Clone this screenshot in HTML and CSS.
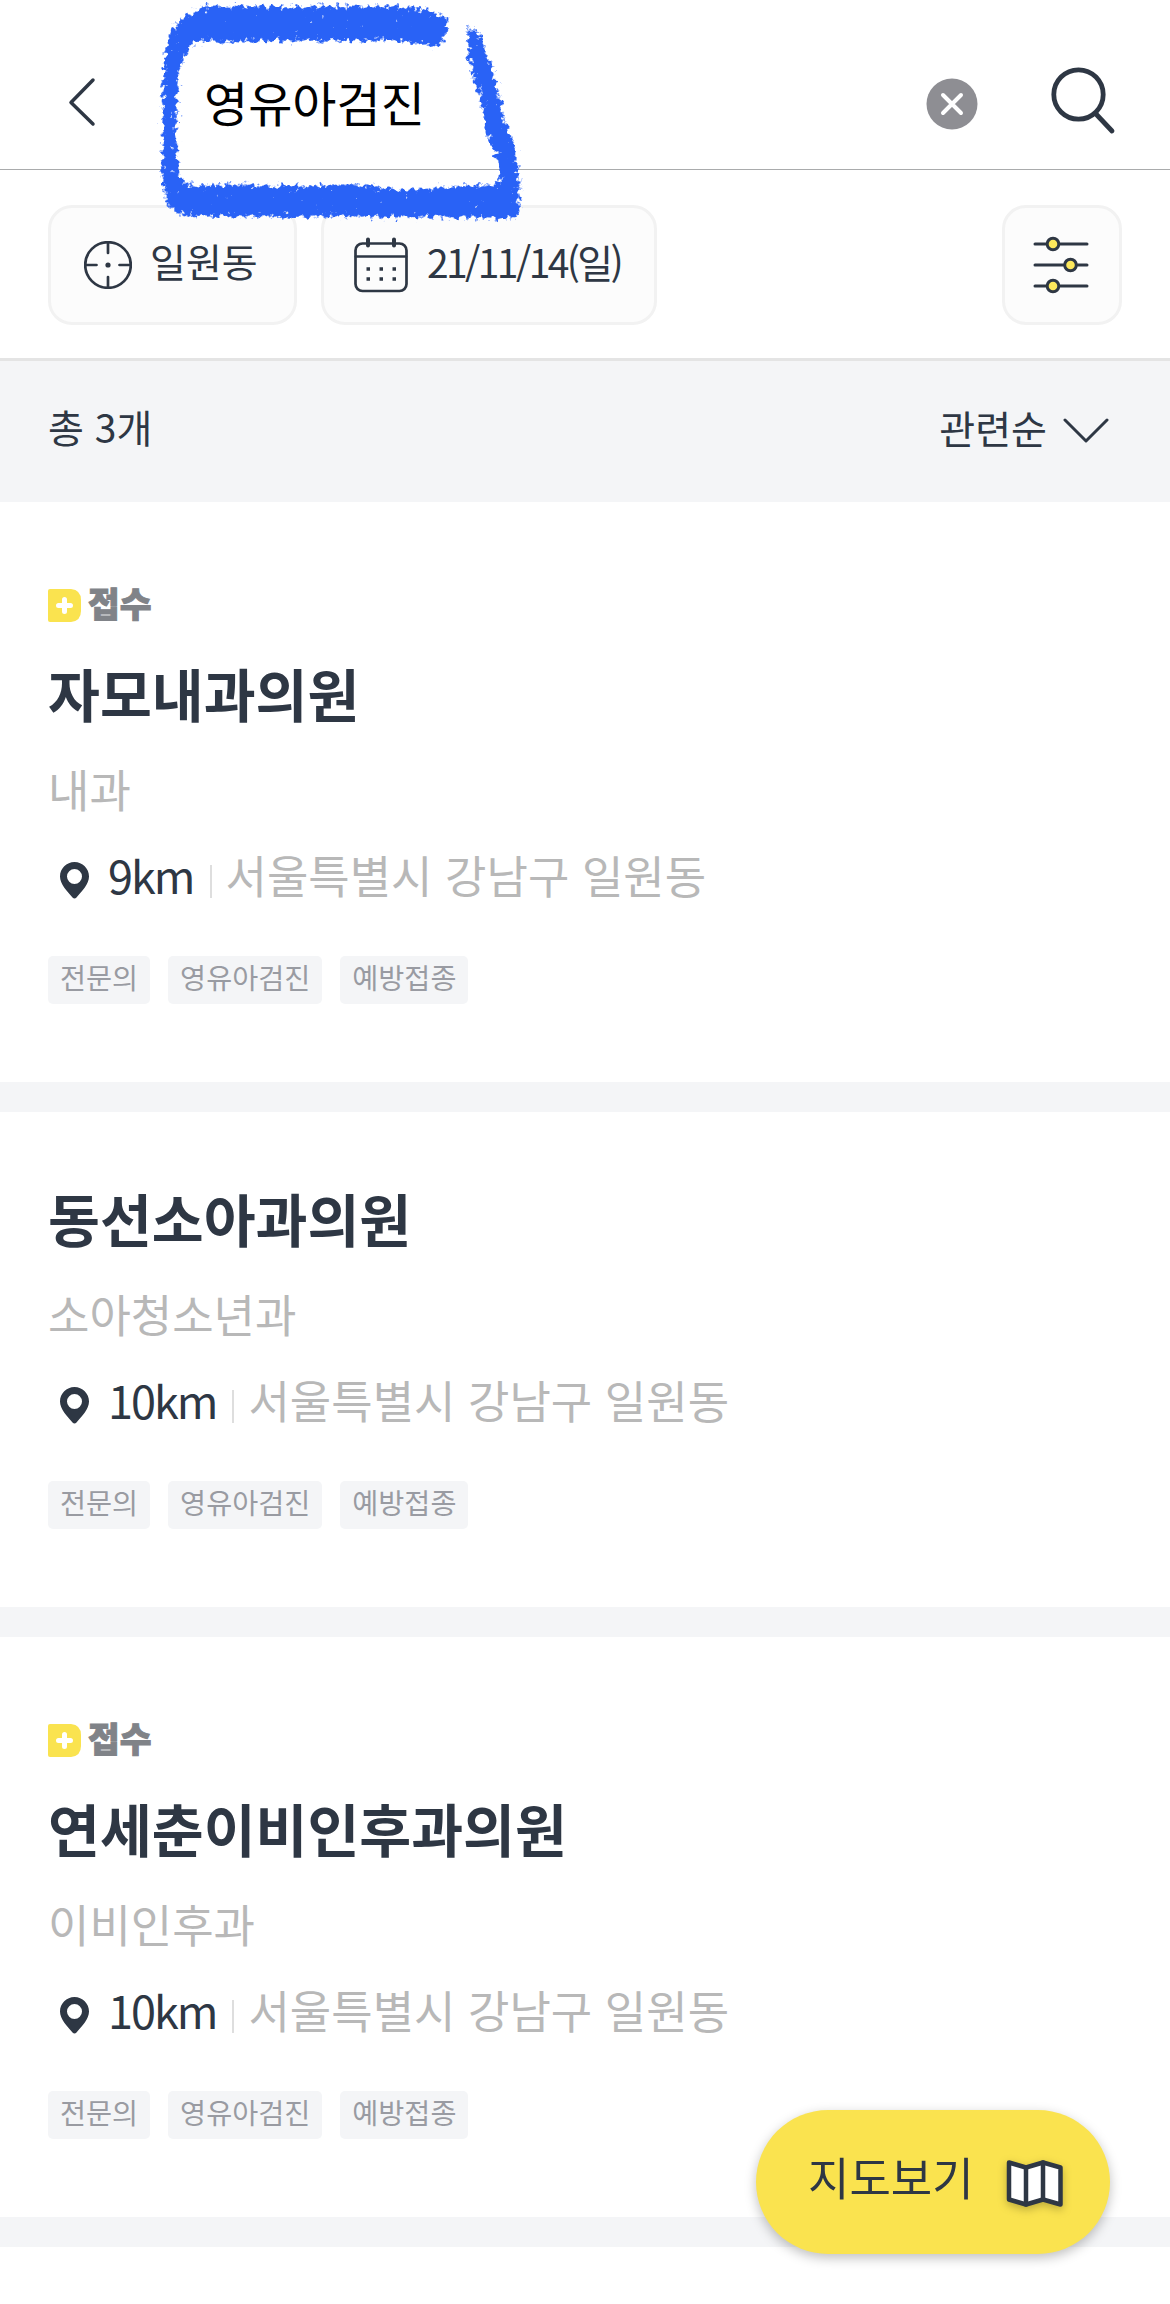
FILE: index.html
```html
<!DOCTYPE html>
<html lang="ko">
<head>
    <meta charset="UTF-8">
    <meta name="viewport" content="width=device-width, initial-scale=1.0">
    <title>영유아검진</title>
    <link rel="stylesheet" href="styles.css">
</head>
<body>
    <header class="search-bar">
        <button class="icon-button back">
            <svg width="28" height="50" viewBox="0 0 28 50"><path d="M25 3 L3 25.5 L25 47" /></svg>
        </button>
        <input type="text" class="search-input" value="영유아검진">
        <button class="icon-button clear">
            <svg width="52" height="52" viewBox="0 0 52 52">
                <circle cx="26" cy="26" r="25.5" />
                <path d="M17 17 L35 35 M35 17 L17 35" />
            </svg>
        </button>
        <button class="icon-button search">
            <svg width="66" height="70" viewBox="0 0 66 70">
                <circle cx="28.5" cy="29.5" r="24.7" />
                <path d="M46 49 L62 66" />
            </svg>
        </button>
    </header>

    <div class="filters">
        <button class="filter location">
            <svg width="48" height="48" viewBox="0 0 48 48">
                <circle cx="24" cy="24" r="22.8" />
                <path d="M24 1 V12 M24 36 V47 M1 24 H12.500 M35.500 24 H47" />
                <circle class="dot" cx="24" cy="24" r="2.600" />
            </svg>
            <span>일원동</span>
        </button>
        <button class="filter date">
            <svg width="54" height="56" viewBox="0 0 54 56">
                <rect x="1.500" y="6.500" width="51" height="47.500" rx="7" />
                <path d="M2 19.500 H52" />
                <path class="ring" d="M14 2.500 V8.500 M40 2.500 V8.500" />
                <path class="days" d="M12.500 32 H16 M25.500 32 H29 M38.500 32 H42 M12.500 42 H16 M25.500 42 H29 M38.500 42 H42" />
            </svg>
            <span>21/11/14(일)</span>
        </button>
        <button class="filter options">
            <svg width="58" height="60" viewBox="0 0 58 60">
                <path d="M3 9 H55 M3 30 H55 M3 51 H55" />
                <circle cx="21" cy="9" r="5.800" />
                <circle cx="38.500" cy="30" r="5.800" />
                <circle cx="21" cy="51" r="5.800" />
            </svg>
        </button>
    </div>

    <div class="summary">
        <span>총 3개</span>
        <button class="sort">
            <span>관련순</span>
            <svg width="46" height="26" viewBox="0 0 46 26"><path d="M2 2 L23 23 L44 2" /></svg>
        </button>
    </div>

    <main>
        <article class="hospital">
            <div class="badge">
                <svg width="33" height="33" viewBox="0 0 33 33">
                    <path class="badge-bg" d="M2 0 H23 Q33 1 33 11 V22 Q33 32 23 33 H2 Q0 33 0 31 V2 Q0 0 2 0 Z" />
                    <path class="badge-plus" d="M16.500 10.500 V22.500 M10.500 16.500 H22.500" />
                </svg>
                <span>접수</span>
            </div>
            <h2>자모내과의원</h2>
            <p class="department">내과</p>
            <div class="place">
                <svg class="pin" width="29" height="37" viewBox="0 0 29 37"><path fill-rule="evenodd" d="M14.500 0 C22.500 0 29 6.500 29 14.500 C29 22 22 29 16.500 35.500 Q14.500 37.500 12.500 35.500 C7 29 0 22 0 14.500 C0 6.500 6.500 0 14.500 0 Z M14.500 7 A7.500 7.500 0 1 0 14.500 22 A7.500 7.500 0 1 0 14.500 7 Z" /></svg>
                <span class="distance">9km</span>
                <span class="address">서울특별시 강남구 일원동</span>
            </div>
            <div class="tags">
                <span>전문의</span>
                <span>영유아검진</span>
                <span>예방접종</span>
            </div>
        </article>

        <article class="hospital">
            <h2>동선소아과의원</h2>
            <p class="department">소아청소년과</p>
            <div class="place">
                <svg class="pin" width="29" height="37" viewBox="0 0 29 37"><path fill-rule="evenodd" d="M14.500 0 C22.500 0 29 6.500 29 14.500 C29 22 22 29 16.500 35.500 Q14.500 37.500 12.500 35.500 C7 29 0 22 0 14.500 C0 6.500 6.500 0 14.500 0 Z M14.500 7 A7.500 7.500 0 1 0 14.500 22 A7.500 7.500 0 1 0 14.500 7 Z" /></svg>
                <span class="distance">10km</span>
                <span class="address">서울특별시 강남구 일원동</span>
            </div>
            <div class="tags">
                <span>전문의</span>
                <span>영유아검진</span>
                <span>예방접종</span>
            </div>
        </article>

        <article class="hospital">
            <div class="badge">
                <svg width="33" height="33" viewBox="0 0 33 33">
                    <path class="badge-bg" d="M2 0 H23 Q33 1 33 11 V22 Q33 32 23 33 H2 Q0 33 0 31 V2 Q0 0 2 0 Z" />
                    <path class="badge-plus" d="M16.500 10.500 V22.500 M10.500 16.500 H22.500" />
                </svg>
                <span>접수</span>
            </div>
            <h2>연세춘이비인후과의원</h2>
            <p class="department">이비인후과</p>
            <div class="place">
                <svg class="pin" width="29" height="37" viewBox="0 0 29 37"><path fill-rule="evenodd" d="M14.500 0 C22.500 0 29 6.500 29 14.500 C29 22 22 29 16.500 35.500 Q14.500 37.500 12.500 35.500 C7 29 0 22 0 14.500 C0 6.500 6.500 0 14.500 0 Z M14.500 7 A7.500 7.500 0 1 0 14.500 22 A7.500 7.500 0 1 0 14.500 7 Z" /></svg>
                <span class="distance">10km</span>
                <span class="address">서울특별시 강남구 일원동</span>
            </div>
            <div class="tags">
                <span>전문의</span>
                <span>영유아검진</span>
                <span>예방접종</span>
            </div>
        </article>
    </main>

    <button class="map-button">
        <span>지도보기</span>
        <svg width="58" height="50" viewBox="0 0 58 50">
            <path d="M3 3.500 L20 8.500 L37 3.500 L54.500 8.500 V45.500 L37 40.500 L20 45.500 L3 40.500 Z" />
            <path d="M20 8.500 V45.500 M37 3.500 V40.500" />
        </svg>
    </button>

    <!-- crayon mark round the search word -->
    <svg class="crayon" width="560" height="240" viewBox="0 0 560 240">
        <filter id="grain" filterUnits="userSpaceOnUse" x="0" y="0" width="560" height="240" color-interpolation-filters="sRGB">
            <feTurbulence type="fractalNoise" baseFrequency="0.2" numOctaves="3" seed="4" result="noise" />
            <feGaussianBlur in="SourceAlpha" stdDeviation="3.5" result="soft" />
            <feComposite in="soft" in2="noise" operator="arithmetic" k2="1.500" k3="1.800" k4="-1.550" />
            <feComponentTransfer result="grains"><feFuncA type="linear" slope="3" intercept="0" /></feComponentTransfer>
            <!-- keep the grains near the stroke -->
            <feMorphology in="SourceAlpha" operator="dilate" radius="5" result="near" />
            <feComposite in="grains" in2="near" operator="in" result="mask" />
            <feFlood flood-color="#2962f6" />
            <feComposite in2="mask" operator="in" />
        </filter>
        <path filter="url(#grain)" d="M450 18 L425 9 L400 6 L340 6 L270 6 L205 6 L182 18 L168 34 L163 70 L162 130 L162 180 L166 202 L180 216 L260 217 L400 217 L460 218 L519 219 L520 190 L516 150 L505 120 L496 80 L480 35 L470 22 L466 40 L469 62 L479 95 L487 135 L498 165 L501 184 L450 186 L400 190 L360 184 L300 186 L230 184 L190 186 L178 175 L177 130 L178 80 L182 60 L194 42 L300 41 L400 41 L442 48 Z" />
    </svg>
</body>
</html>
```

FILE: styles.css
```css
* {
    box-sizing: border-box;
}
body {
    margin: 0;
    height: 2304px;
    overflow: hidden;
    background-color: #fff;
    color: #2e3744;
    font-family: "Noto Sans CJK KR", sans-serif;
}
button {
    padding: 0;
    border: none;
    background: none;
    color: inherit;
    font-family: inherit;
    cursor: pointer;
}
svg {
    display: block;
    flex-shrink: 0;
    fill: none;
    stroke: #2e3744;
    stroke-linecap: round;
    stroke-linejoin: round;
}

/* search bar */
.search-bar {
    display: flex;
    align-items: center;
    height: 170px;
    padding: 34px 54px 0 68px;
    border-bottom: 1px solid #a9abac;
}
.back svg {
    stroke-width: 3.5;
}
.search-input {
    flex: 1;
    min-width: 0;
    height: 80px;
    margin: 0 0 0 108px;
    padding: 0 0 2px;
    border: none;
    outline: none;
    background: none;
    color: #000;
    font-family: inherit;
    font-size: 48px;
}
.clear {
    margin: 4px 72px 0 0;
}
.clear circle {
    fill: #8e8e93;
    stroke: none;
}
.clear path {
    stroke: #fff;
    stroke-width: 4;
}
.search {
    margin-bottom: 3px;
}
.search svg {
    stroke-width: 4.8;
}

/* filters */
.filters {
    display: flex;
    gap: 24px;
    height: 191px;
    padding: 35px 48px 33px;
    border-bottom: 3px solid #e4e4e4;
}
.filter {
    display: flex;
    align-items: center;
    height: 120px;
    border: 3px solid #f2f2f2;
    border-radius: 24px;
    background-color: #fcfcfc;
    font-size: 39px;
}
.filter span {
    line-height: 56px;
    margin-bottom: 10px;
    white-space: nowrap;
}
.filter svg {
    stroke-width: 2.7;
}
.location {
    width: 249px;
    padding-left: 33px;
    gap: 18px;
}
.location .dot {
    fill: #2e3744;
    stroke: none;
}
.date {
    width: 336px;
    padding-left: 30px;
    gap: 19px;
}
.date span {
    margin-bottom: 8px;
    letter-spacing: -2.6px;
}
.date .ring {
    stroke-width: 4;
}
.date .days {
    stroke-width: 3.5;
    stroke-linecap: butt;
}
.options {
    width: 120px;
    margin-left: auto;
    padding-right: 3px;
    justify-content: center;
}
.options svg {
    stroke-width: 3;
}
.options circle {
    fill: #fde85c;
}

/* result count */
.summary {
    display: flex;
    justify-content: space-between;
    height: 141px;
    padding: 37px 61px 0 48px;
    background-color: #f4f5f7;
    font-size: 39px;
    line-height: 56px;
}
.sort {
    display: flex;
    align-items: center;
    height: 58px;
    gap: 16px;
    font-size: 39px;
    line-height: 56px;
}
.sort svg {
    margin-top: 7px;
    stroke-width: 3;
}

/* hospital list */
.hospital {
    padding: 70px 48px 78px;
    border-bottom: 30px solid #f4f5f7;
}
.badge {
    display: flex;
    align-items: center;
    gap: 7px;
    height: 33px;
    margin: 17px 0 35px;
    color: #808388;
    font-size: 34.5px;
    font-weight: 900;
    line-height: 33px;
    -webkit-text-stroke: 1px #808388;
}
.badge span {
    margin-bottom: 6px;
}
.badge-bg {
    fill: #fae34f;
    stroke: none;
}
.badge-plus {
    stroke: #fff;
    stroke-width: 5;
}
h2 {
    margin: 0;
    font-size: 56.4px;
    font-weight: 700;
    line-height: 72px;
}
.department {
    margin: 30px 0 26px;
    color: #b8b8b8;
    font-size: 45px;
    line-height: 60px;
}
.place {
    display: flex;
    align-items: center;
    height: 60px;
    padding-left: 12px;
    font-size: 45px;
    line-height: 60px;
}
.pin {
    margin-top: 11px;
    fill: #2e3744;
    stroke: none;
}
.distance {
    margin-left: 19px;
    letter-spacing: -2px;
}
.address {
    display: flex;
    align-items: center;
    margin-left: 16px;
    color: #b8b8b8;
}
.address::before {
    content: "";
    width: 2px;
    height: 33px;
    margin: 12px 14px 0 0;
    background-color: #dedede;
}
.tags {
    display: flex;
    gap: 18px;
    margin-top: 51px;
}
.tags span {
    height: 48px;
    padding: 0 12px;
    border-radius: 5px;
    background-color: #f4f5f7;
    color: #999ba2;
    font-size: 28.3px;
    line-height: 42px;
}

/* floating map button */
.map-button {
    position: fixed;
    left: 756px;
    top: 2110px;
    display: flex;
    align-items: center;
    width: 354px;
    height: 144px;
    padding-left: 52px;
    border-radius: 72px;
    background-color: #fae34f;
    box-shadow: 0 4px 12px rgba(0, 0, 0, 0.25);
    font-size: 45px;
    line-height: 60px;
}
.map-button span {
    margin-bottom: 11px;
}
.map-button svg {
    margin: 3px 0 0 32px;
    stroke-width: 4.5;
    filter: drop-shadow(0 3px 4px rgba(0, 0, 0, 0.25));
}
.map-button path:first-child {
    fill: #fff;
}

.crayon {
    position: absolute;
    left: 0;
    top: 0;
    pointer-events: none;
}
.crayon path {
    fill: #2962f6;
    stroke: none;
}
```
